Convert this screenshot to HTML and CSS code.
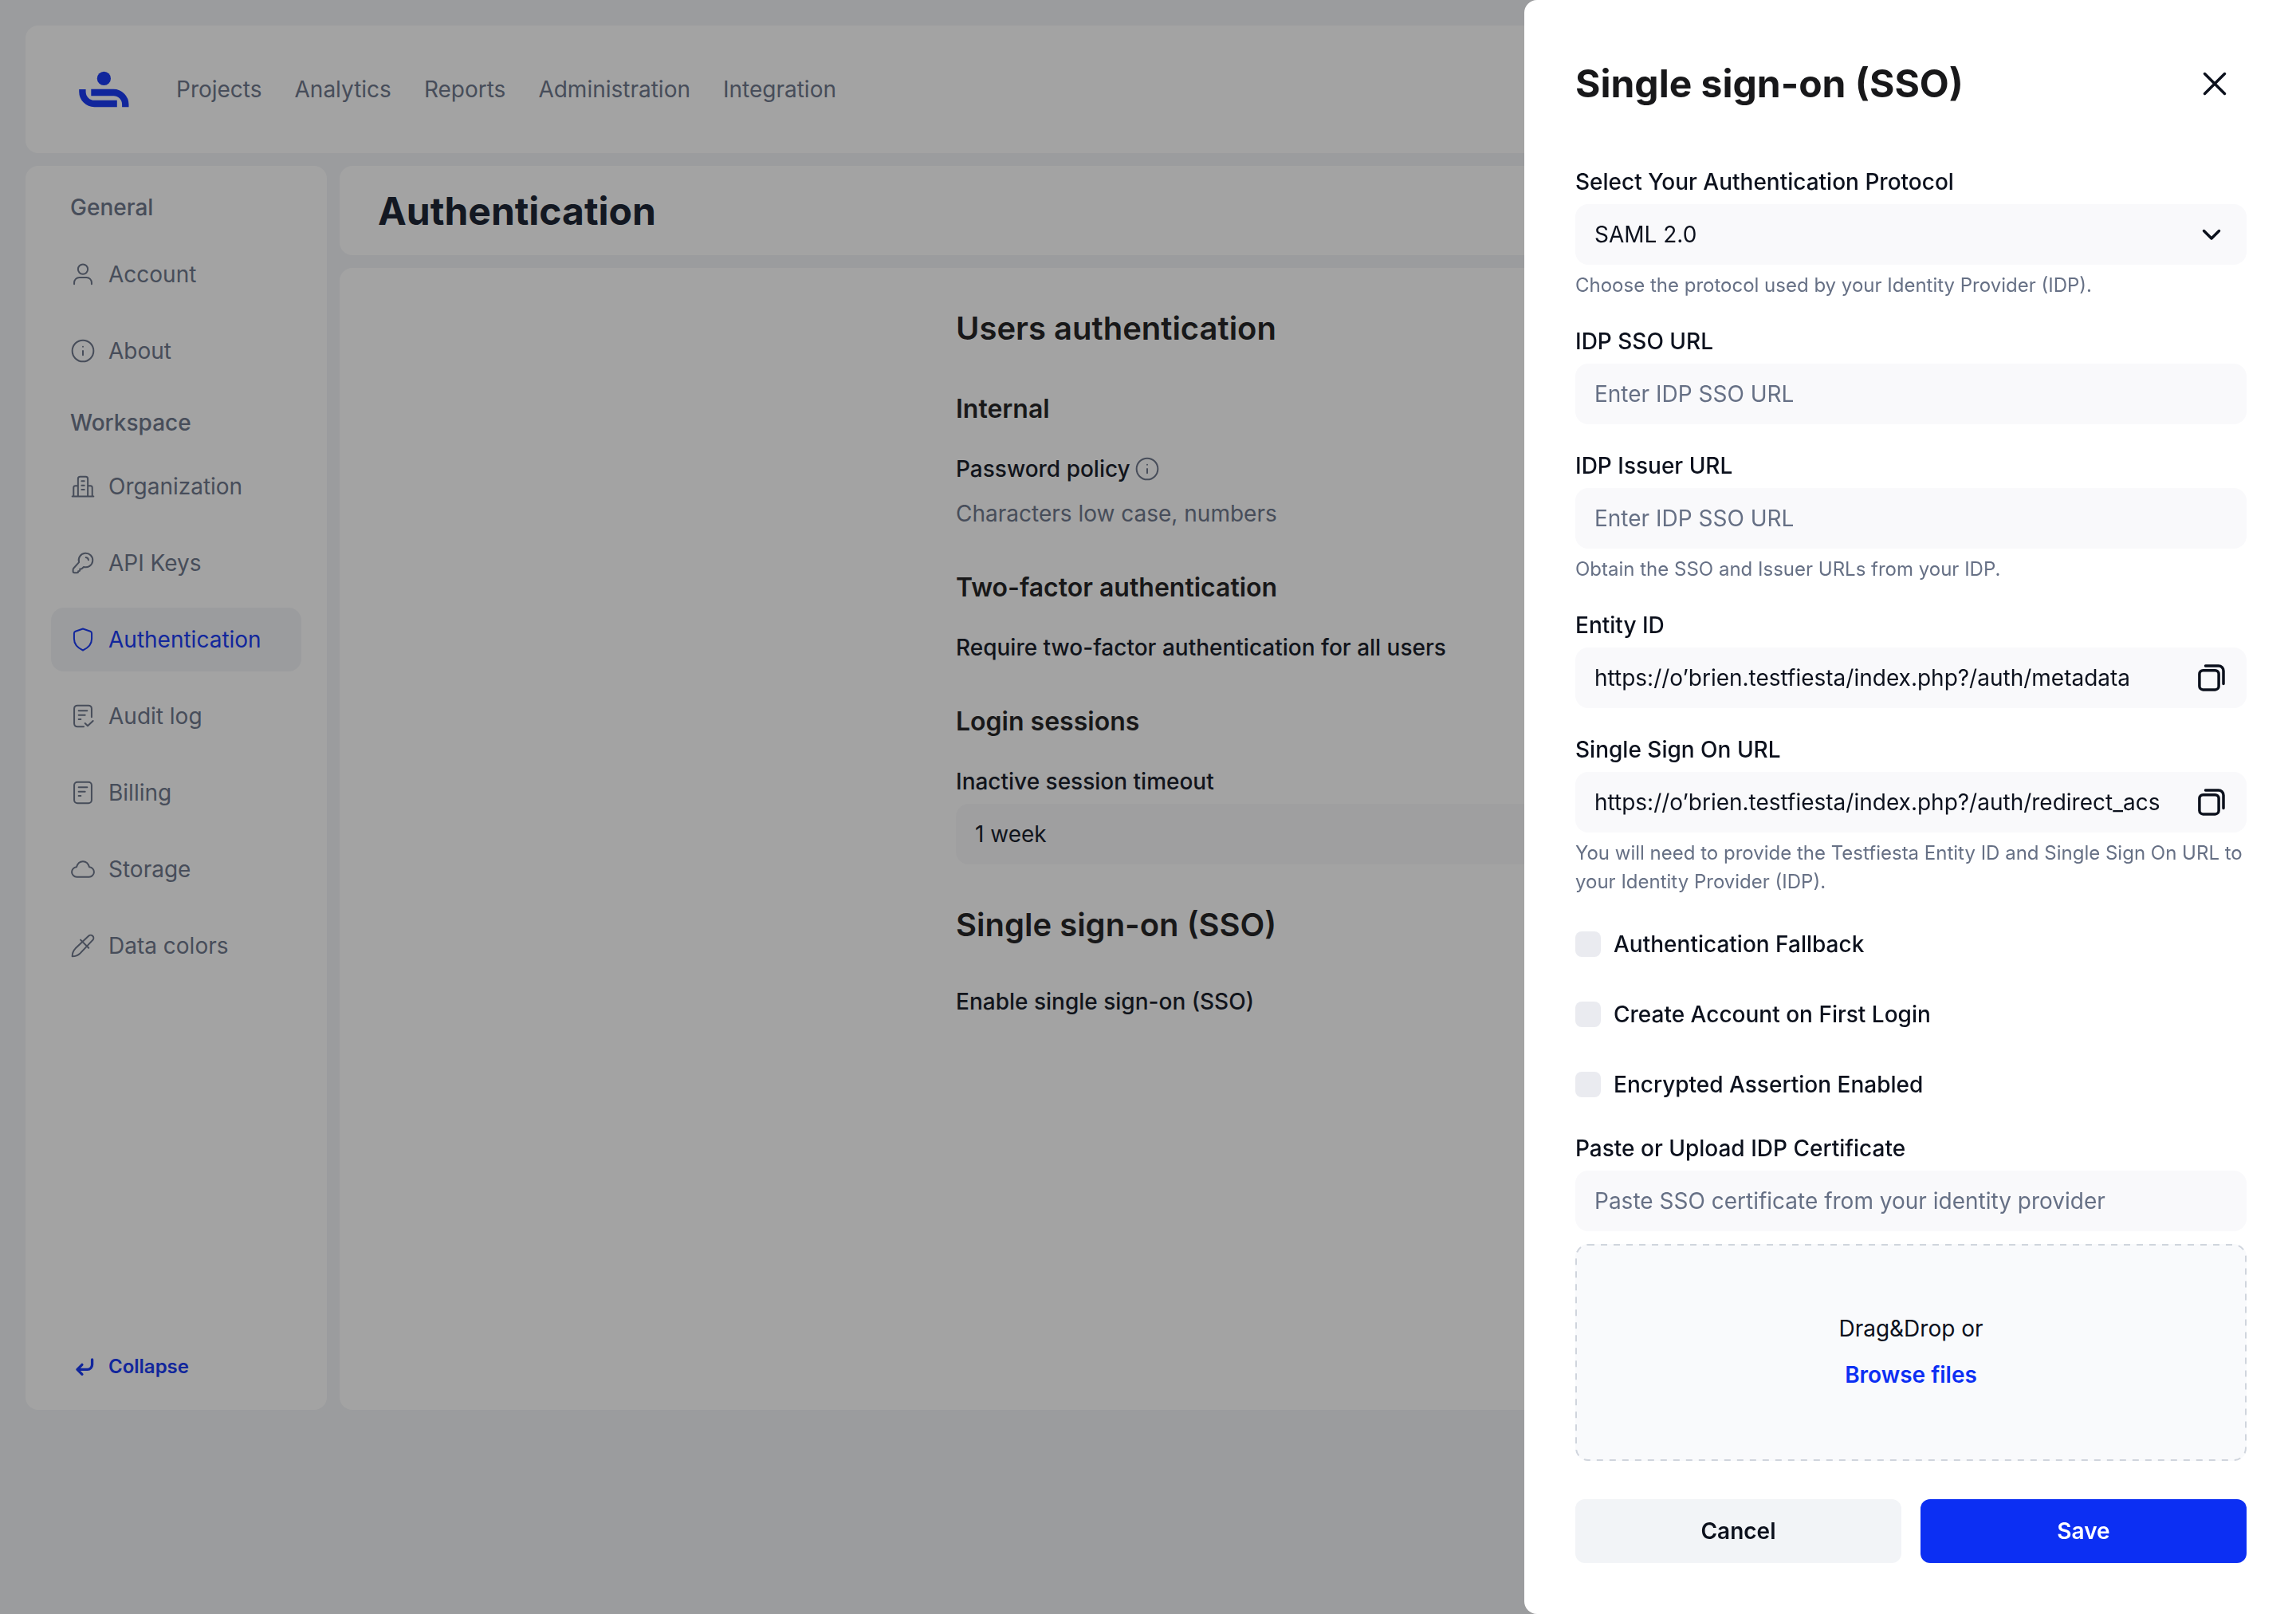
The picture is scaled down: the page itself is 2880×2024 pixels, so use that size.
FILE: index.html
```html
<!DOCTYPE html>
<html lang="en">
<head>
<meta charset="utf-8">
<title>Authentication</title>
<meta name="viewport" content="width=device-width, initial-scale=1">
<link rel="stylesheet" href="styles.css">
</head>
<body>
<div class="app">
  <header class="topbar">
    <a class="logo" href="#" aria-label="Home">
      <svg class="logo-mark" viewBox="0 0 64 46" fill="none" stroke="currentColor" stroke-width="8.4">
        <circle cx="31.4" cy="9.4" r="8.6" fill="currentColor" stroke="none"/>
        <path d="M4.4 23v3a15 15 0 0 0 15 15h28.4"/>
        <path d="M15.3 27h28a15 15 0 0 1 15 15v3.2"/>
      </svg>
    </a>
    <nav class="topnav">
      <a href="#">Projects</a>
      <a href="#">Analytics</a>
      <a href="#">Reports</a>
      <a href="#">Administration</a>
      <a href="#">Integration</a>
    </nav>
  </header>

  <div class="workspace">
    <aside class="sidebar">
      <h2 class="side-title">General</h2>
      <nav class="side-nav">
        <a class="side-item" href="#">
          <svg class="icon" viewBox="0 0 24 24"><circle cx="12" cy="7.2" r="4.6"/><path d="M3.8 21.2v-1.4a4.8 4.8 0 0 1 4.8-4.8h6.8a4.8 4.8 0 0 1 4.8 4.8v1.4"/></svg>
          Account
        </a>
        <a class="side-item" href="#">
          <svg class="icon" viewBox="0 0 24 24"><circle cx="12" cy="12" r="10"/><path d="M12 12v4M12 8v.1"/></svg>
          About
        </a>
      </nav>
      <h2 class="side-title">Workspace</h2>
      <nav class="side-nav">
        <a class="side-item" href="#">
          <svg class="icon" viewBox="0 0 24 24"><path d="M2 21.4h20M7.4 21.4V4.8c0-1.1.9-2 2-2h5.2c1.1 0 2 .9 2 2v16.6M3.2 21.4v-8.2c0-1 .8-1.8 1.8-1.8h2.4M16.6 11.4H19c1 0 1.8.8 1.8 1.8v8.2M10.8 6.9h2.5M10.8 11h2.5M10.8 15h2.5"/></svg>
          Organization
        </a>
        <a class="side-item" href="#">
          <svg class="icon" viewBox="0 0 24 24"><path d="M8.3 11.3a6.6 6.6 0 1 1 4.4 4.4l-1.6 1.5c-.3.3-.6.4-1 .4h-.9v1.2c0 .5-.4.8-.8.8h-.8v.6c0 .6-.4 1-1 1H4c-.8 0-1.3-.5-1.3-1.3v-1.6c0-.6.2-1 .6-1.4z"/><path d="M14.8 6.8a2.7 2.7 0 0 1 2.4 2.4"/></svg>
          API Keys
        </a>
        <a class="side-item side-item-active" href="#" aria-current="page">
          <svg class="icon" viewBox="0 0 24 24"><path d="M12 1.9l7 2.4c.8.3 1.3 1 1.3 1.8v5.2c0 5-3.3 8.6-8.3 10.8-5-2.2-8.3-5.8-8.3-10.8V6.1c0-.8.5-1.5 1.3-1.8z"/></svg>
          Authentication
        </a>
        <a class="side-item" href="#">
          <svg class="icon" viewBox="0 0 24 24"><path d="M20.2 13V5c0-1.7-1.3-3-3-3H6.8c-1.7 0-3 1.3-3 3v14c0 1.7 1.3 3 3 3h6M8 7h8M8 11h6M8 15h2M14 18.8l2.5 2.4 5-4.7"/></svg>
          Audit log
        </a>
        <a class="side-item" href="#">
          <svg class="icon" viewBox="0 0 24 24"><rect x="3.8" y="2" width="16.4" height="20" rx="3"/><path d="M8 7h8M8 11h6M8 15h2"/></svg>
          Billing
        </a>
        <a class="side-item" href="#">
          <svg class="icon" viewBox="0 0 24 24"><path d="M6.4 19.3a4.65 4.65 0 0 1-.4-9.3c.9-3.2 3.1-5.4 6-5.4s5.1 2.2 6 5.4a4.65 4.65 0 0 1-.4 9.3z"/></svg>
          Storage
        </a>
        <a class="side-item" href="#">
          <svg class="icon" viewBox="0 0 24 24"><path d="M2 22c0-3 .9-5.4 3-7.5L17.3 2.8a2.7 2.7 0 0 1 3.9 3.9L9.5 19c-2.1 2.1-4.5 3-7.5 3zM9.8 6.5l7.6 7.6"/></svg>
          Data colors
        </a>
      </nav>
      <button class="collapse" type="button">
        <svg class="icon icon-bold" viewBox="0 0 24 24"><path d="M20.7 5.2v4.8a4.5 4.5 0 0 1-4.5 4.5H6.7M11.2 10l-4.5 4.5 4.5 4.5"/></svg>
        Collapse
      </button>
    </aside>

    <div class="main">
      <div class="card page-head"><h1>Authentication</h1></div>
      <main class="card content">
        <div class="column">
          <section class="group">
            <h2>Users authentication</h2>
            <section class="setting">
              <h3>Internal</h3>
              <div class="policy">
                <p class="setting-name">Password policy
                  <svg class="icon" viewBox="0 0 24 24"><circle cx="12" cy="12" r="10"/><path d="M12 12v4M12 8v.1"/></svg>
                </p>
                <p class="muted">Characters low case, numbers</p>
              </div>
            </section>
            <section class="setting">
              <h3>Two-factor authentication</h3>
              <p class="setting-name">Require two-factor authentication for all users</p>
            </section>
            <section class="setting">
              <h3>Login sessions</h3>
              <div class="field">
                <label for="timeout">Inactive session timeout</label>
                <div class="control select-control">
                  <select id="timeout"><option>1 week</option></select>
                  <svg class="glyph chevron" viewBox="0 0 40 40"><path d="M10.5 15.5l9.5 9.5 9.5-9.5"/></svg>
                </div>
              </div>
            </section>
          </section>
          <section class="group">
            <h2>Single sign-on (SSO)</h2>
            <p class="setting-name">Enable single sign-on (SSO)</p>
          </section>
        </div>
      </main>
    </div>
  </div>
</div>

<div class="overlay">
  <div class="drawer" role="dialog" aria-modal="true" aria-labelledby="drawer-title">
    <div class="drawer-head">
      <h2 id="drawer-title">Single sign-on (SSO)</h2>
      <button class="icon-button" type="button" aria-label="Close">
        <svg class="glyph" viewBox="0 0 40 40"><path d="M7.5 7.5l25 25M32.5 7.5l-25 25"/></svg>
      </button>
    </div>
    <form class="form">
      <div class="field">
        <label for="protocol">Select Your Authentication Protocol</label>
        <div class="control select-control">
          <select id="protocol"><option>SAML 2.0</option></select>
          <svg class="glyph chevron" viewBox="0 0 40 40"><path d="M10.5 15.5l9.5 9.5 9.5-9.5"/></svg>
        </div>
        <p class="hint">Choose the protocol used by your Identity Provider (IDP).</p>
      </div>
      <div class="field">
        <label for="sso-url">IDP SSO URL</label>
        <div class="control"><input id="sso-url" type="text" placeholder="Enter IDP SSO URL"></div>
      </div>
      <div class="field">
        <label for="issuer-url">IDP Issuer URL</label>
        <div class="control"><input id="issuer-url" type="text" placeholder="Enter IDP SSO URL"></div>
        <p class="hint">Obtain the SSO and Issuer URLs from your IDP.</p>
      </div>
      <div class="field">
        <label for="entity">Entity ID</label>
        <div class="control">
          <input id="entity" type="text" value="https://o’brien.testfiesta/index.php?/auth/metadata" readonly>
          <button class="icon-button copy" type="button" aria-label="Copy entity ID">
            <svg class="glyph" viewBox="0 0 40 40"><rect x="4.9" y="10.7" width="24.2" height="24.2" rx="4.5"/><path d="M12.5 5H28.8a6.2 6.2 0 0 1 6.2 6.2V27.5"/></svg>
          </button>
        </div>
      </div>
      <div class="field">
        <label for="acs">Single Sign On URL</label>
        <div class="control">
          <input id="acs" type="text" value="https://o’brien.testfiesta/index.php?/auth/redirect_acs" readonly>
          <button class="icon-button copy" type="button" aria-label="Copy single sign on URL">
            <svg class="glyph" viewBox="0 0 40 40"><rect x="4.9" y="10.7" width="24.2" height="24.2" rx="4.5"/><path d="M12.5 5H28.8a6.2 6.2 0 0 1 6.2 6.2V27.5"/></svg>
          </button>
        </div>
        <p class="hint">You will need to provide the Testfiesta Entity ID and Single Sign On URL to your Identity Provider (IDP).</p>
      </div>
      <div class="checks">
        <label class="check"><input type="checkbox">Authentication Fallback</label>
        <label class="check"><input type="checkbox">Create Account on First Login</label>
        <label class="check"><input type="checkbox">Encrypted Assertion Enabled</label>
      </div>
      <div class="field">
        <label for="cert">Paste or Upload IDP Certificate</label>
        <div class="control"><input id="cert" type="text" placeholder="Paste SSO certificate from your identity provider"></div>
        <div class="dropzone">
          <svg class="dropzone-outline" aria-hidden="true"><rect class="dropzone-dashes" x="1" y="1" rx="15"/></svg>
          <span>Drag&amp;Drop or</span>
          <button class="browse" type="button">Browse files</button>
        </div>
      </div>
      <div class="actions">
        <button class="button button-plain" type="button">Cancel</button>
        <button class="button button-primary" type="submit">Save</button>
      </div>
    </form>
  </div>
</div>
</body>
</html>
```

FILE: styles.css
```css
:root {
  --ink: #0c111d;
  --heading: #18181a;
  --muted: #667085;
  --blue: #0c2ff3;
  --field: #f9f9fb;
  --page: #f2f4f7;
}

* {
  box-sizing: border-box;
  margin: 0;
}

body {
  background: var(--page);
  color: var(--ink);
  font: 400 28px/40px Inter, "Liberation Sans", sans-serif;
}

a {
  color: inherit;
  text-decoration: none;
}

button,
input,
select {
  padding: 0;
  border: 0;
  background: none;
  color: inherit;
  font: inherit;
}

.icon {
  flex: none;
  width: 32px;
  height: 32px;
  fill: none;
  stroke: currentColor;
  stroke-width: 1.5;
  stroke-linecap: round;
  stroke-linejoin: round;
}

.icon-bold {
  stroke-width: 2.5;
}

.glyph {
  display: block;
  width: 40px;
  height: 40px;
  fill: none;
  stroke: currentColor;
  stroke-width: 3.5;
  stroke-linecap: round;
  stroke-linejoin: round;
}

/* Page */

.app {
  display: flex;
  flex-direction: column;
  gap: 16px;
  min-height: 100vh;
  padding: 32px 32px 256px;
}

.topbar {
  display: flex;
  align-items: center;
  gap: 58px;
  height: 160px;
  padding: 0 67px;
  border-radius: 16px;
  background: #fff;
}

.logo {
  color: var(--blue);
}

.logo-mark {
  display: block;
  width: 64px;
  height: 46px;
}

.topnav {
  display: flex;
  gap: 41px;
  color: var(--muted);
}

.workspace {
  display: flex;
  flex: 1;
  gap: 16px;
}

.sidebar {
  display: flex;
  flex: none;
  flex-direction: column;
  width: 378px;
  padding: 32px 32px 14px;
  border-radius: 16px;
  background: #fff;
  color: var(--muted);
}

.side-title {
  padding: 0 24px;
  font-size: 28px;
  font-weight: 500;
}

.side-nav {
  display: flex;
  flex-direction: column;
  gap: 16px;
  padding: 24px 0 30px;
}

.side-nav + .side-title + .side-nav {
  padding-top: 20px;
}

.side-item,
.collapse {
  display: flex;
  align-items: center;
  gap: 16px;
  height: 80px;
  padding: 0 24px;
  border-radius: 16px;
}

.side-item-active {
  background: var(--page);
  color: var(--blue);
}

.collapse {
  margin-top: auto;
  color: var(--blue);
  font-size: 24px;
  font-weight: 600;
}

.main {
  display: flex;
  flex: 1;
  flex-direction: column;
  gap: 16px;
}

.card {
  border-radius: 16px;
  background: #fff;
}

.page-head {
  padding: 24px 48px 22px;
}

.page-head h1 {
  color: #101828;
  font-size: 48px;
  font-weight: 700;
  line-height: 66px;
}

.content {
  flex: 1;
  padding: 52px 64px;
}

.column {
  display: flex;
  flex-direction: column;
  gap: 52px;
  max-width: 876px;
  margin: 0 auto;
}

.group {
  display: flex;
  flex-direction: column;
  gap: 52px;
}

.group h2 {
  color: var(--heading);
  font-size: 40px;
  font-weight: 600;
  line-height: 48px;
}

.group h2 + .setting {
  margin-top: 4px;
}

.setting {
  display: flex;
  flex-direction: column;
  gap: 34px;
}

.setting h3 {
  color: var(--heading);
  font-size: 32px;
  font-weight: 600;
  line-height: 42px;
}

.setting-name {
  display: flex;
  align-items: center;
  gap: 5px;
  font-weight: 500;
}

.setting-name .icon {
  color: var(--muted);
}

.policy {
  display: flex;
  flex-direction: column;
  gap: 16px;
}

.muted {
  color: var(--muted);
}

/* Form controls */

.field {
  display: flex;
  flex-direction: column;
  gap: 8px;
}

.field label {
  font-weight: 500;
}

.control {
  display: flex;
  align-items: center;
  height: 76px;
  border-radius: 16px;
  background: var(--field);
}

.control input {
  flex: 1;
  min-width: 0;
  height: 100%;
  padding: 0 24px;
}

.control input::placeholder {
  color: var(--muted);
  opacity: 1;
}

.select-control {
  display: grid;
}

.select-control select {
  grid-area: 1 / 1;
  width: 100%;
  height: 100%;
  padding: 0 24px;
  appearance: none;
}

.chevron {
  grid-area: 1 / 1;
  justify-self: end;
  margin-right: 24px;
  pointer-events: none;
}

.hint {
  color: var(--muted);
  font-size: 24px;
  line-height: 36px;
}

.copy {
  margin-right: 24px;
}

/* Drawer */

.overlay {
  position: fixed;
  inset: 0;
  display: flex;
  justify-content: flex-end;
  background: rgba(24, 24, 26, 0.4);
}

.drawer {
  width: 968px;
  max-width: 100%;
  padding: 72px 62px 64px 64px;
  overflow-y: auto;
  border-radius: 16px 0 0 16px;
  background: #fff;
}

.drawer-head {
  display: flex;
  align-items: center;
  justify-content: space-between;
  margin-bottom: 70px;
  padding-right: 20px;
}

.drawer-head h2 {
  color: var(--heading);
  font-size: 48px;
  font-weight: 700;
  line-height: 66px;
}

.form {
  display: flex;
  flex-direction: column;
  gap: 32px;
}

.checks {
  display: flex;
  flex-direction: column;
  gap: 48px;
  padding: 8px 0;
}

.check {
  display: flex;
  align-items: center;
  gap: 16px;
  font-weight: 500;
}

.check input {
  width: 32px;
  height: 32px;
  margin: 0;
  border-radius: 8px;
  background: #eaebf0;
  appearance: none;
}

.check input:checked {
  background: var(--blue);
}

.dropzone {
  position: relative;
  display: flex;
  flex-direction: column;
  align-items: center;
  gap: 18px;
  margin-top: 8px;
  padding: 86px 24px 88px;
  border-radius: 16px;
  background: #f9fafc;
}

.dropzone-outline {
  position: absolute;
  inset: 0;
  width: 100%;
  height: 100%;
  pointer-events: none;
}

.dropzone-dashes {
  width: calc(100% - 2px);
  height: calc(100% - 2px);
  fill: none;
  stroke: #d0d5dd;
  stroke-width: 2;
  stroke-dasharray: 8 8;
}

.browse {
  color: var(--blue);
  font-weight: 600;
}

.actions {
  display: grid;
  grid-template-columns: 1fr 1fr;
  gap: 24px;
  margin-top: 16px;
}

.button {
  height: 80px;
  border-radius: 12px;
  font-weight: 600;
}

.button-plain {
  background: #f2f4f7;
}

.button-primary {
  background: var(--blue);
  color: #fff;
}
```
